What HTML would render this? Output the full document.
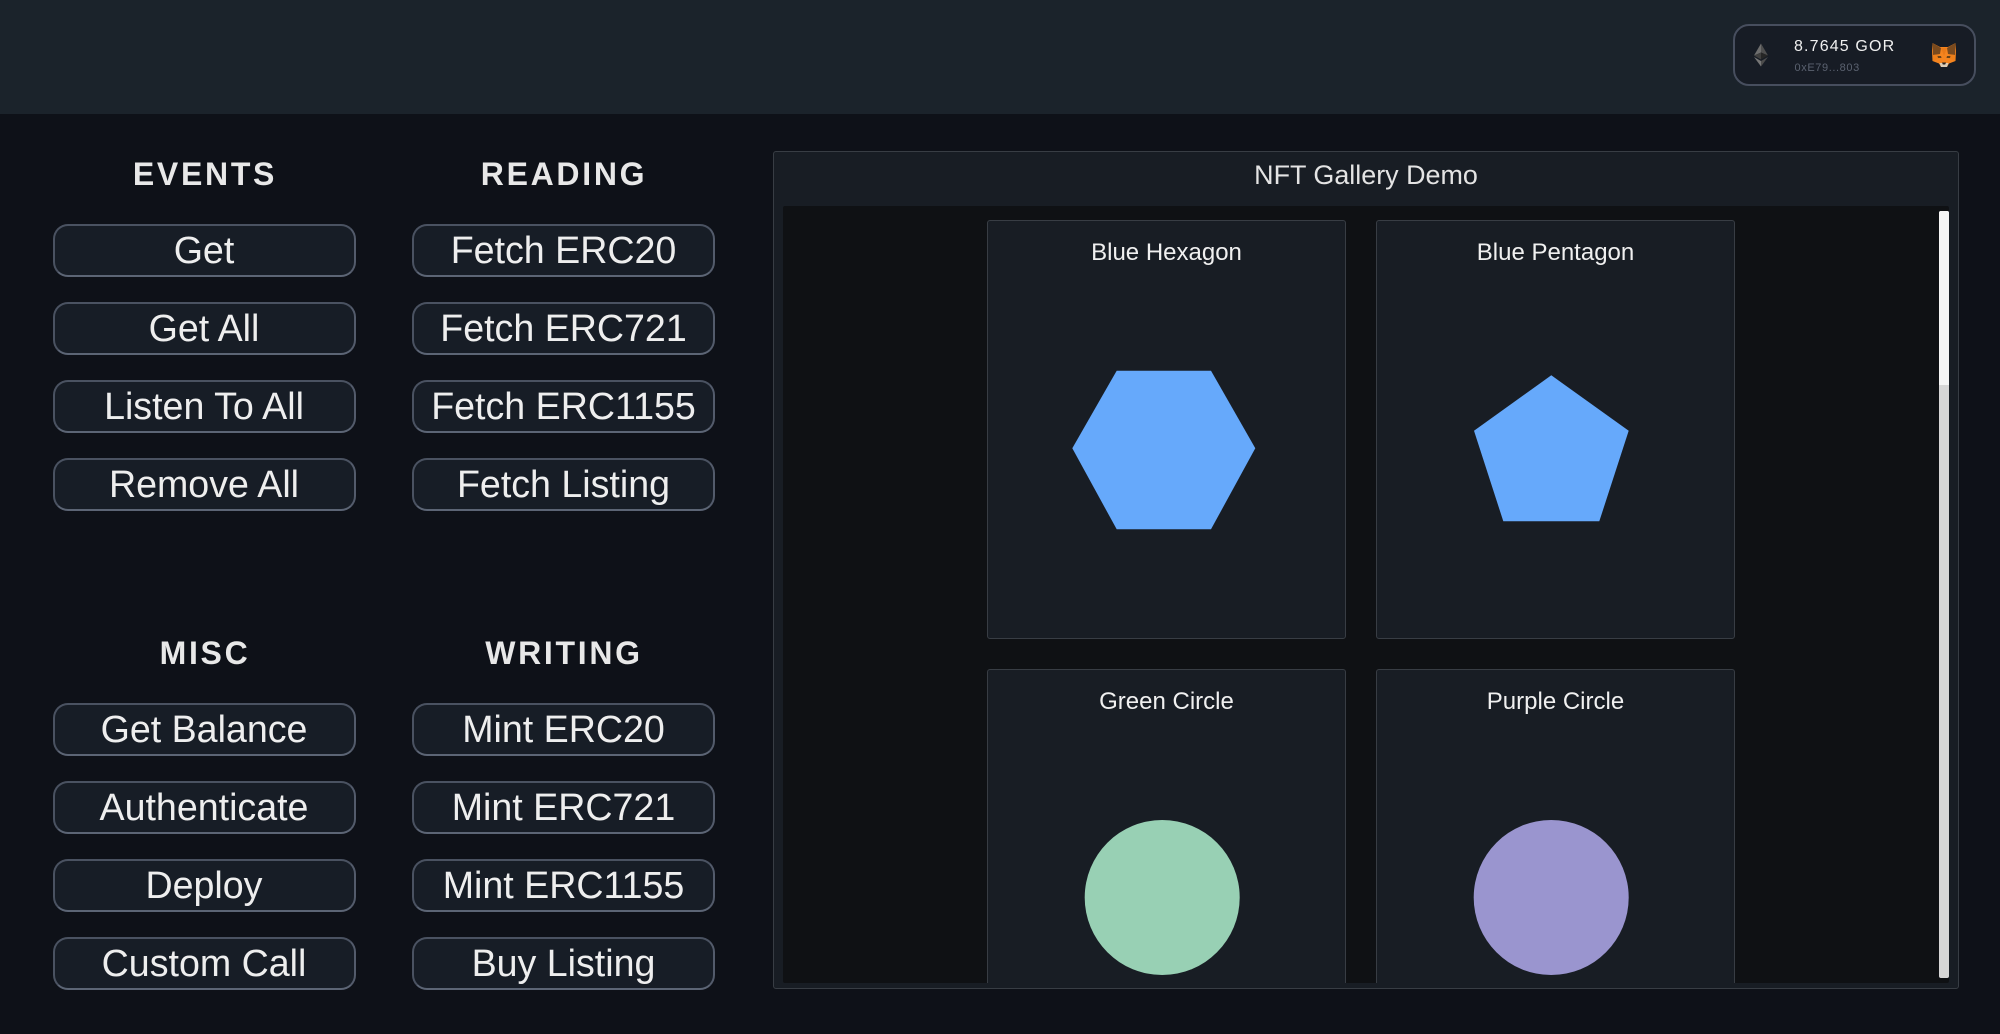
<!DOCTYPE html>
<html>
<head>
<meta charset="utf-8">
<title>NFT Gallery Demo</title>
<style>
html,body{margin:0;padding:0;width:2000px;height:1034px;overflow:hidden;background:#0e1118;font-family:"Liberation Sans",sans-serif;}
*{box-sizing:border-box;}
.abs{position:absolute;}
#hdr{left:0;top:0;width:2000px;height:114px;background:#1b232b;}
#wallet{left:1733px;top:24px;width:243px;height:62px;background:#171c25;border:2px solid #474e5e;border-radius:16px;filter:blur(.3px);}
#bal{left:1794px;top:36.5px;font-size:16px;line-height:20px;letter-spacing:1.15px;color:#f0f0f0;white-space:nowrap;filter:blur(.25px);}
#addr{left:1794.5px;top:61px;font-size:11px;line-height:14px;letter-spacing:.6px;color:#5b6270;white-space:nowrap;filter:blur(.25px);}
.h{position:absolute;width:302px;text-align:center;font-size:32px;font-weight:bold;letter-spacing:2.7px;line-height:36px;color:#e8e8e8;white-space:nowrap;filter:blur(.25px);}
.b{position:absolute;width:303px;height:52.5px;background:#171d26;border:2.5px solid #4a5261;border-bottom-color:#5c6575;border-right-color:#535b6b;border-radius:15px;color:#eeeeee;font-size:37.6px;line-height:48.5px;text-align:center;white-space:nowrap;filter:blur(.2px);}
#p{left:773px;top:151px;width:1186px;height:838px;background:#181d24;border:1.5px solid #383d44;border-radius:3px;}
#ptitle{left:773px;top:156.5px;width:1186px;text-align:center;font-size:26.9px;line-height:36px;color:#e4e4e4;white-space:nowrap;}
#inner{left:782.5px;top:206px;width:1166.5px;height:777px;background:#0f1114;overflow:hidden;border-radius:2px;}
.c{position:absolute;width:359px;background:#181d24;border:1.5px solid #383d44;border-radius:3px;}
.c.cut{border-bottom:0;border-radius:3px 3px 0 0;}
.t{position:absolute;width:359px;text-align:center;font-size:24px;line-height:30px;color:#f0f0f0;white-space:nowrap;}
#track{left:1939px;top:211px;width:10px;height:767px;background:#d6d6d6;border-radius:2px;}
#thumb{left:1939px;top:211px;width:10px;height:174px;background:#f5f5f5;border-radius:2px 2px 0 0;}
</style>
</head>
<body>
<div class="abs" id="hdr"></div>
<div class="abs" id="wallet"></div>
<svg class="abs" style="left:1752.5px;top:43px;filter:blur(.3px)" width="16" height="24" viewBox="0 0 16 24">
<polygon points="8,0.5 8,9.5 1,12.5" fill="#6e6e6e"/>
<polygon points="8,0.5 8,9.5 15,12.5" fill="#4f4f4f"/>
<polygon points="1,12.5 8,9.5 8,16.5" fill="#3f3f3f"/>
<polygon points="15,12.5 8,9.5 8,16.5" fill="#262626"/>
<polygon points="1,14 8,18 8,23.5" fill="#767676"/>
<polygon points="15,14 8,18 8,23.5" fill="#4c4c4c"/>
</svg>
<div class="abs" id="bal">8.7645 GOR</div>
<div class="abs" id="addr">0xE79...803</div>
<svg class="abs" style="left:1932px;top:43px;filter:blur(.3px)" width="24" height="24" viewBox="0 0 24 24">
<polygon points="0.5,0 8,4 16,4 23.5,0 24,8 23.5,18 17,20.5 15,24 9,24 7,20.5 0.5,18 0,8" fill="#f5841f"/>
<polygon points="0.5,0 9,5 8,11 1,12" fill="#7a4a1e"/>
<polygon points="23.5,0 15,5 16,11 23,12" fill="#7a4a1e"/>
<polygon points="9,5 15,5 12,13" fill="#ea7a18"/>
<polygon points="0.5,12 7,11.5 8,15 1,18" fill="#ee7f1a"/>
<polygon points="23.5,12 17,11.5 16,15 23,18" fill="#ee7f1a"/>
<polygon points="5.5,13 9,13 9.5,15 6,15" fill="#6a4218"/>
<polygon points="18.5,13 15,13 14.5,15 18,15" fill="#6a4218"/>
<polygon points="7.5,20 16.5,20 15,24 9,24" fill="#dccdb8"/>
<polygon points="10,19.5 14,19.5 13.2,21.5 10.8,21.5" fill="#2a2320"/>
</svg>

<div class="h" style="left:54px;top:156px">EVENTS</div>
<div class="h" style="left:413px;top:156px">READING</div>
<div class="h" style="left:54px;top:635px">MISC</div>
<div class="h" style="left:413px;top:635px">WRITING</div>

<div class="b" style="left:52.5px;top:224px">Get</div>
<div class="b" style="left:52.5px;top:302px">Get All</div>
<div class="b" style="left:52.5px;top:380px">Listen To All</div>
<div class="b" style="left:52.5px;top:458px">Remove All</div>
<div class="b" style="left:412px;top:224px">Fetch ERC20</div>
<div class="b" style="left:412px;top:302px">Fetch ERC721</div>
<div class="b" style="left:412px;top:380px">Fetch ERC1155</div>
<div class="b" style="left:412px;top:458px">Fetch Listing</div>
<div class="b" style="left:52.5px;top:703px">Get Balance</div>
<div class="b" style="left:52.5px;top:781px">Authenticate</div>
<div class="b" style="left:52.5px;top:859px">Deploy</div>
<div class="b" style="left:52.5px;top:937px">Custom Call</div>
<div class="b" style="left:412px;top:703px">Mint ERC20</div>
<div class="b" style="left:412px;top:781px">Mint ERC721</div>
<div class="b" style="left:412px;top:859px">Mint ERC1155</div>
<div class="b" style="left:412px;top:937px">Buy Listing</div>

<div class="abs" id="p"></div>
<div class="abs" id="ptitle">NFT Gallery Demo</div>
<div class="abs" id="inner">
  <div class="c" style="left:204.5px;top:14px;height:419px"></div>
  <div class="c" style="left:593.5px;top:14px;height:419px"></div>
  <div class="c cut" style="left:204.5px;top:463px;height:314px"></div>
  <div class="c cut" style="left:593.5px;top:463px;height:314px"></div>
  <div class="t" style="left:204.5px;top:32px">Blue Hexagon</div>
  <div class="t" style="left:593.5px;top:32px">Blue Pentagon</div>
  <div class="t" style="left:204.5px;top:481px">Green Circle</div>
  <div class="t" style="left:593.5px;top:481px">Purple Circle</div>
</div>
<svg class="abs" style="left:0;top:0;pointer-events:none" width="2000" height="1034" viewBox="0 0 2000 1034">
  <polygon points="1116.7,370.7 1211,370.7 1255.3,448.3 1211,529.3 1116.7,529.3 1072.3,448.3" fill="#66a9fb"/>
  <polygon points="1551.3,375.3 1628.7,430.7 1599.3,521.3 1503.3,521.3 1474,430.7" fill="#66a9fb"/>
  <circle cx="1162.2" cy="897.5" r="77.5" fill="#98d0b4"/>
  <circle cx="1551.2" cy="897.5" r="77.5" fill="#9a95cf"/>
</svg>
<div class="abs" id="track"></div>
<div class="abs" id="thumb"></div>
</body>
</html>
